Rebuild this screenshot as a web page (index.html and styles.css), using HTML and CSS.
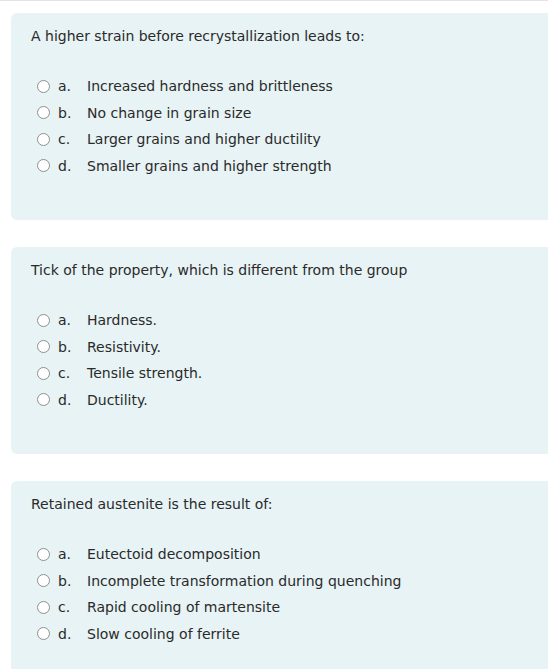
FILE: index.html
```html
<!DOCTYPE html>
<html lang="en">
<head>
<meta charset="utf-8">
<title>Quiz</title>
<link rel="stylesheet" href="styles.css">
</head>
<body>
<div class="page">
  <div class="card">
    <div class="qtext">A higher strain before recrystallization leads to:</div>
    <div class="answers">
      <div class="opt"><span class="radio"></span><span class="num">a.</span><span class="label">Increased hardness and brittleness</span></div>
      <div class="opt"><span class="radio"></span><span class="num">b.</span><span class="label">No change in grain size</span></div>
      <div class="opt"><span class="radio"></span><span class="num">c.</span><span class="label">Larger grains and higher ductility</span></div>
      <div class="opt"><span class="radio"></span><span class="num">d.</span><span class="label">Smaller grains and higher strength</span></div>
    </div>
  </div>
  <div class="card">
    <div class="qtext">Tick of the property, which is different from the group</div>
    <div class="answers">
      <div class="opt"><span class="radio"></span><span class="num">a.</span><span class="label">Hardness.</span></div>
      <div class="opt"><span class="radio"></span><span class="num">b.</span><span class="label">Resistivity.</span></div>
      <div class="opt"><span class="radio"></span><span class="num">c.</span><span class="label">Tensile strength.</span></div>
      <div class="opt"><span class="radio"></span><span class="num">d.</span><span class="label">Ductility.</span></div>
    </div>
  </div>
  <div class="card">
    <div class="qtext">Retained austenite is the result of:</div>
    <div class="answers">
      <div class="opt"><span class="radio"></span><span class="num">a.</span><span class="label">Eutectoid decomposition</span></div>
      <div class="opt"><span class="radio"></span><span class="num">b.</span><span class="label">Incomplete transformation during quenching</span></div>
      <div class="opt"><span class="radio"></span><span class="num">c.</span><span class="label">Rapid cooling of martensite</span></div>
      <div class="opt"><span class="radio"></span><span class="num">d.</span><span class="label">Slow cooling of ferrite</span></div>
    </div>
  </div>
</div>
</body>
</html>
```
FILE: styles.css
```css
html, body {
  margin: 0;
  padding: 0;
  background: #ffffff;
  overflow: hidden;
}
body {
  font-family: "DejaVu Sans", sans-serif;
  font-size: 14px;
  color: #2a2a2a;
  border-top: 1px solid #e4e2e4;
}
.page {
  padding: 12px 0 0 11px;
  display: flex;
  flex-direction: column;
  gap: 27px;
}
.card {
  background: #e7f3f5;
  border-radius: 6px 0 0 6px;
  height: 207px;
  box-sizing: border-box;
  margin-right: -20px;
  padding: 13px 20px 0 20px;
}
.qtext {
  line-height: 20px;
}
.answers {
  margin-top: 27px;
  padding-left: 6px;
}
.opt {
  display: flex;
  align-items: center;
  height: 26.5px;
}
.radio {
  width: 13px;
  height: 13px;
  box-sizing: border-box;
  border: 1px solid #8f8f8f;
  border-radius: 50%;
  background: #ffffff;
  margin-right: 8px;
  flex: none;
}
.num {
  width: 29px;
  flex: none;
}
```
